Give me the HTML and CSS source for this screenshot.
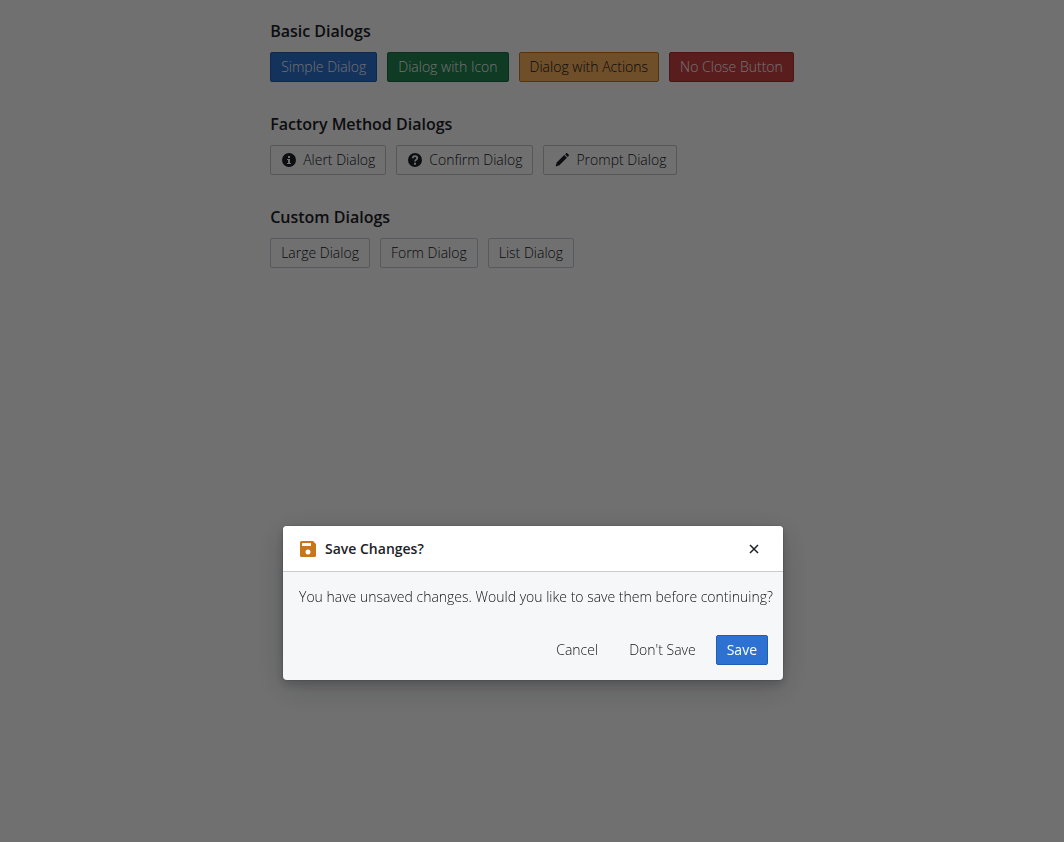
FILE: index.html
```html
<!DOCTYPE html>
<html lang="en">
<head>
<meta charset="utf-8">
<meta name="viewport" content="width=device-width, initial-scale=1">
<title>Dialogs</title>
<link rel="stylesheet" href="styles.css">
</head>
<body>
<main class="page">
  <div class="content">
    <section class="group">
      <h2 class="group-title">Basic Dialogs</h2>
      <div class="row">
        <button type="button" class="btn primary">Simple Dialog</button>
        <button type="button" class="btn success">Dialog with Icon</button>
        <button type="button" class="btn warning">Dialog with Actions</button>
        <button type="button" class="btn danger">No Close Button</button>
      </div>
    </section>
    <section class="group">
      <h2 class="group-title">Factory Method Dialogs</h2>
      <div class="row">
        <button type="button" class="btn"><svg class="icon" viewBox="0 0 16 16" aria-hidden="true"><path fill-rule="evenodd" d="M8 1a7 7 0 1 0 0 14A7 7 0 0 0 8 1zM7 4h2v2H7zm3 8H6v-1h1V8H6V7h3v4h1z"/></svg>Alert Dialog</button>
        <button type="button" class="btn"><svg class="icon" viewBox="0 0 16 16" aria-hidden="true"><circle cx="8" cy="8" r="7"/><path class="icon-line" d="M5.8 6.2C5.8 3.4 10.3 3.5 10.3 6.1 10.3 7.6 8 7.7 8 9.6"/><path class="icon-cut" d="M7 10.7h2v2H7z"/></svg>Confirm Dialog</button>
        <button type="button" class="btn"><svg class="icon" viewBox="0 0 16 16" aria-hidden="true"><path d="M2.700 10.600 10.200 3.100l2.700 2.700-7.500 7.500L1.600 14.400zM11 2.300l.9-.9c.5-.5 1-.5 1.500 0l1.200 1.200c.5.5.5 1 0 1.500l-.9.9z"/></svg>Prompt Dialog</button>
      </div>
    </section>
    <section class="group">
      <h2 class="group-title">Custom Dialogs</h2>
      <div class="row">
        <button type="button" class="btn outlined">Large Dialog</button>
        <button type="button" class="btn outlined">Form Dialog</button>
        <button type="button" class="btn outlined">List Dialog</button>
      </div>
    </section>
  </div>
</main>
<div class="backdrop">
  <div class="dialog" role="dialog" aria-modal="true" aria-labelledby="dialog-title">
    <header class="dialog-header">
      <svg class="icon-save" viewBox="0 0 16 16" aria-hidden="true"><path fill-rule="evenodd" d="M1.500 0H13l3 3v11.500a1.500 1.500 0 0 1-1.500 1.500h-13A1.500 1.500 0 0 1 0 14.500v-13A1.500 1.500 0 0 1 1.500 0zM3 2a1 1 0 0 0-1 1v2h9V2zm5 6.500a2.500 2.500 0 1 0 0 5 2.500 2.500 0 0 0 0-5z"/></svg>
      <h1 class="dialog-title" id="dialog-title">Save Changes?</h1>
      <button type="button" class="close" aria-label="Close"><svg class="icon" viewBox="0 0 16 16" aria-hidden="true"><path class="cross" d="m4 4 8 8M12 4l-8 8"/></svg></button>
    </header>
    <p class="dialog-body">You have unsaved changes. Would you like to save them before continuing?</p>
    <footer class="dialog-footer">
      <button type="button" class="btn minimal">Cancel</button>
      <button type="button" class="btn minimal">Don't Save</button>
      <button type="button" class="btn primary save">Save</button>
    </footer>
  </div>
</div>
</body>
</html>
```
FILE: styles.css
```css
* { box-sizing: border-box; }
body {
  margin: 0;
  background: #fff;
  color: #111418;
  font: 300 14px/18px "Open Sans", "Noto Sans", sans-serif;
}
.page { display: flex; justify-content: center; padding: 19px 20px; }
.content { display: flex; flex-direction: column; gap: 30px; }
.group { display: flex; flex-direction: column; gap: 9px; }
.group-title { margin: 0; color: #1c2127; font-size: 16px; line-height: 24px; font-weight: 600; }
.row { display: flex; flex-wrap: wrap; gap: 10px; }
.btn {
  display: inline-flex;
  align-items: center;
  justify-content: center;
  gap: 6px;
  height: 30px;
  padding: 0 10px;
  border: 1px solid #c4c6c9;
  border-radius: 2px;
  background: #fff;
  color: #111418;
  font: inherit;
  white-space: nowrap;
}
.icon { width: 16px; height: 16px; fill: #1c2127; }
.icon-line { fill: none; stroke: #fff; stroke-width: 1.8; }
.icon-cut { fill: #fff; }
.primary { background: #2d72d2; border-color: #215db0; color: #fff; }
.success { background: #238551; border-color: #1c6e42; color: #fff; }
.warning { background: #fbb360; border-color: #c87619; }
.danger { background: #cd4246; border-color: #ac2f33; color: #fff; }
.outlined { border-color: #c5cbd3; }
.backdrop {
  position: fixed;
  inset: 0;
  display: flex;
  align-items: flex-end;
  justify-content: center;
  padding: 0 16px 162px 18px;
  background: rgba(0, 0, 0, 0.56);
}
.dialog {
  width: 100%;
  max-width: 500px;
  border-radius: 4px;
  background: #f6f7f9;
  box-shadow: 0 0 0 1px rgba(17, 20, 24, 0.1), 0 4px 8px rgba(17, 20, 24, 0.2), 0 8px 32px rgba(17, 20, 24, 0.2);
}
.dialog-header {
  display: flex;
  align-items: center;
  gap: 9px;
  height: 46px;
  padding: 0 14px 0 17px;
  border-bottom: 1px solid #ccc;
  border-radius: 4px 4px 0 0;
  background: #fff;
}
.icon-save { width: 16px; height: 16px; fill: #c87619; }
.dialog-title { flex: 1; margin: 0; color: #1c2127; font-size: 14px; line-height: 18px; font-weight: 600; }
.close { display: flex; align-items: center; justify-content: center; width: 30px; height: 30px; padding: 0; border: 0; background: none; }
.cross { fill: none; stroke: #1c2127; stroke-width: 1.5; }
.dialog-body { margin: 0; padding: 16px 8px 29px 16px; }
.dialog-footer { display: flex; justify-content: flex-end; gap: 9px; padding: 0 15px 15px; }
.minimal { border-color: transparent; background: none; }
.save { font-weight: 400; }
```
